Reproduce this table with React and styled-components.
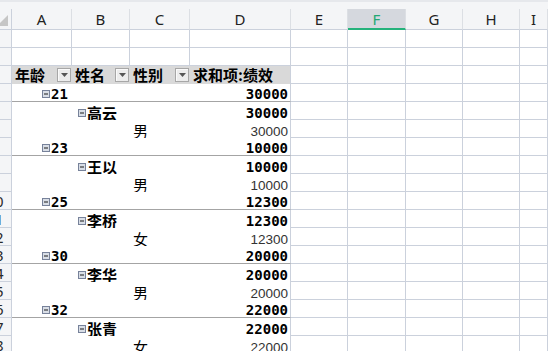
import React from 'react';
import styled, { createGlobalStyle } from 'styled-components';

const GRID = '#cbd1dc';
const HEAD_BG = '#f4f5f7';
const COLS = '12px 60px 58px 60px 101px 57px 58px 57px 57px 1fr';
const LETTERS = ['A', 'B', 'C', 'D', 'E', 'F', 'G', 'H', 'I'];
const ACTIVE_COL = 'F';

const groups = [
  { age: '21', name: '高云', sex: '男', value: '30000' },
  { age: '23', name: '王以', sex: '男', value: '10000' },
  { age: '25', name: '李桥', sex: '女', value: '12300' },
  { age: '30', name: '李华', sex: '男', value: '20000' },
  { age: '32', name: '张青', sex: '女', value: '22000' },
];

const Global = createGlobalStyle`
  html, body { margin: 0; padding: 0; background: #fff; overflow: hidden; }
  body { font-family: "Noto Sans", "Noto Sans CJK SC", sans-serif; }
`;

const Sheet = styled.div`
  width: 548px;
  height: 351px;
  overflow: hidden;
  display: flex;
  flex-direction: column;
  background: #fff;
`;

const TopStrip = styled.div`
  height: 9px;
  flex-shrink: 0;
  box-sizing: border-box;
  background: ${HEAD_BG};
  border-top: 2px solid #e6e8ec;
`;

const Row = styled.div`
  display: grid;
  grid-template-columns: ${COLS};
  height: ${(p) => p.$h || 18}px;
  flex-shrink: 0;
`;

const Corner = styled.div`
  box-sizing: border-box;
  background: ${HEAD_BG};
  border-right: 1px solid ${GRID};
  border-bottom: 1px solid ${GRID};
  overflow: hidden;
`;

const ColHead = styled.div`
  box-sizing: border-box;
  display: flex;
  align-items: center;
  justify-content: center;
  padding-top: ${(p) => (p.$active ? 1 : 0)}px;
  background: ${(p) => (p.$active ? '#d5d8de' : HEAD_BG)};
  color: ${(p) => (p.$active ? '#22a874' : '#222')};
  border-right: 1px solid #dcdfe4;
  border-bottom: ${(p) => (p.$active ? '2px solid #25b27b' : `1px solid ${GRID}`)};
  font: 400 15px "Noto Sans", sans-serif;
  overflow: hidden;
`;

const RowNum = styled.div`
  box-sizing: border-box;
  display: flex;
  align-items: center;
  background: ${HEAD_BG};
  border-right: 1px solid ${GRID};
  border-bottom: 1px solid ${GRID};
  overflow: hidden;
`;

const RowNumLabel = styled.span`
  flex-shrink: 0;
  width: 24px;
  margin-left: -17px;
  text-align: center;
  font: 400 15px "Noto Sans", sans-serif;
  color: #2a2a2a;
`;

const Cell = styled.div`
  box-sizing: border-box;
  border-right: 1px solid ${GRID};
  border-bottom: 1px solid ${GRID};
`;

const PCell = styled.div`
  box-sizing: border-box;
  display: flex;
  align-items: flex-end;
  justify-content: ${(p) => (p.$right ? 'flex-end' : 'flex-start')};
  padding: 0 ${(p) => (p.$right ? 2 : 0)}px 0 ${(p) => p.$indent || 0}px;
  background: #fff;
  border-right: ${(p) => (p.$edge ? `1px solid ${GRID}` : 'none')};
  border-bottom: ${(p) => (p.$rule ? '1px solid #a4a4a4' : 'none')};
  white-space: nowrap;
  overflow: hidden;
`;

const HeadCell = styled.div`
  box-sizing: border-box;
  display: flex;
  align-items: center;
  justify-content: space-between;
  padding: 0 1px 0 3px;
  background: #d9d9d9;
  border-right: ${(p) => (p.$edge ? `1px solid ${GRID}` : 'none')};
  white-space: nowrap;
  overflow: hidden;
`;

const HeadText = styled.span`
  font: 700 15px "Noto Sans CJK SC", sans-serif;
  color: #000;
  line-height: 18px;
`;

const DropBtn = styled.span`
  box-sizing: border-box;
  width: 14px;
  height: 14px;
  flex-shrink: 0;
  display: flex;
  align-items: center;
  justify-content: center;
  background: #ececec;
  border: 1px solid #a7a7a7;
  box-shadow: inset 1px 1px 0 #fafafa;
`;

const Item = styled.span`
  display: inline-flex;
  align-items: center;
  gap: 1px;
`;

const Label = styled.span`
  font: ${(p) => (p.$bold ? 700 : 400)} 15px "Noto Sans CJK SC", sans-serif;
  color: #000;
  line-height: 15px;
`;

const Num = styled.span`
  font: ${(p) =>
    p.$bold
      ? '700 14px "DejaVu Sans Mono", monospace'
      : '400 13.5px "Liberation Sans", sans-serif'};
  color: ${(p) => (p.$bold ? '#000' : '#333')};
  line-height: ${(p) => (p.$bold ? 14 : 13)}px;
`;

const DownArrow = () => (
  <svg width="7" height="4" viewBox="0 0 7 4">
    <polygon points="0,0 7,0 3.5,4" fill="#555" />
  </svg>
);

const Minus = () => (
  <svg width="8" height="8" viewBox="0 0 8 8">
    <rect x="0.5" y="0.5" width="7" height="7" fill="#d9dee6" stroke="#77829a" />
    <rect x="2" y="3.5" width="4" height="1" fill="#1c1c1c" />
  </svg>
);

const SelectAll = () => (
  <svg width="12" height="21" viewBox="0 0 12 21">
    <polygon points="0,14 8,6 8,17 0,17" fill="#c6c6c6" />
  </svg>
);

const Toggle = ({ children, bold }) => (
  <Item>
    <Minus />
    {/^\d+$/.test(children) ? <Num $bold>{children}</Num> : <Label $bold={bold}>{children}</Label>}
  </Item>
);

const RightBlank = () =>
  ['E', 'F', 'G', 'H', 'I'].map((c) => <Cell key={c} />);

export default function App() {
  let rowNo = 0;
  const next = () => {
    rowNo += 1;
    return rowNo;
  };

  const body = [];
  // two empty rows above the pivot table
  for (let i = 0; i < 2; i += 1) {
    const n = next();
    body.push(
      <Row key={`e${n}`}>
        <RowNum><RowNumLabel>{n}</RowNumLabel></RowNum>
        <Cell /><Cell /><Cell /><Cell />
        <RightBlank />
      </Row>
    );
  }

  const hn = next();
  body.push(
    <Row key="head">
      <RowNum><RowNumLabel>{hn}</RowNumLabel></RowNum>
      <HeadCell><HeadText>年龄</HeadText><DropBtn><DownArrow /></DropBtn></HeadCell>
      <HeadCell><HeadText>姓名</HeadText><DropBtn><DownArrow /></DropBtn></HeadCell>
      <HeadCell><HeadText>性别</HeadText><DropBtn><DownArrow /></DropBtn></HeadCell>
      <HeadCell $edge><HeadText>求和项:绩效</HeadText></HeadCell>
      <RightBlank />
    </Row>
  );

  groups.forEach((g) => {
    const a = next();
    body.push(
      <Row key={`a${a}`}>
        <RowNum><RowNumLabel>{a}</RowNumLabel></RowNum>
        <PCell $indent={30} $rule><Toggle>{g.age}</Toggle></PCell>
        <PCell $rule /><PCell $rule />
        <PCell $right $edge $rule><Num $bold>{g.value}</Num></PCell>
        <RightBlank />
      </Row>
    );
    const b = next();
    body.push(
      <Row key={`b${b}`}>
        <RowNum><RowNumLabel>{b}</RowNumLabel></RowNum>
        <PCell />
        <PCell $indent={6}><Toggle bold>{g.name}</Toggle></PCell>
        <PCell />
        <PCell $right $edge><Num $bold>{g.value}</Num></PCell>
        <RightBlank />
      </Row>
    );
    const c = next();
    body.push(
      <Row key={`c${c}`}>
        <RowNum><RowNumLabel>{c}</RowNumLabel></RowNum>
        <PCell /><PCell />
        <PCell $indent={3}><Label>{g.sex}</Label></PCell>
        <PCell $right $edge><Num>{g.value}</Num></PCell>
        <RightBlank />
      </Row>
    );
  });

  return (
    <>
      <Global />
      <Sheet>
        <TopStrip />
        <Row $h={21}>
          <Corner><SelectAll /></Corner>
          {LETTERS.map((l) => (
            <ColHead key={l} $active={l === ACTIVE_COL}>{l}</ColHead>
          ))}
        </Row>
        {body}
      </Sheet>
    </>
  );
}
